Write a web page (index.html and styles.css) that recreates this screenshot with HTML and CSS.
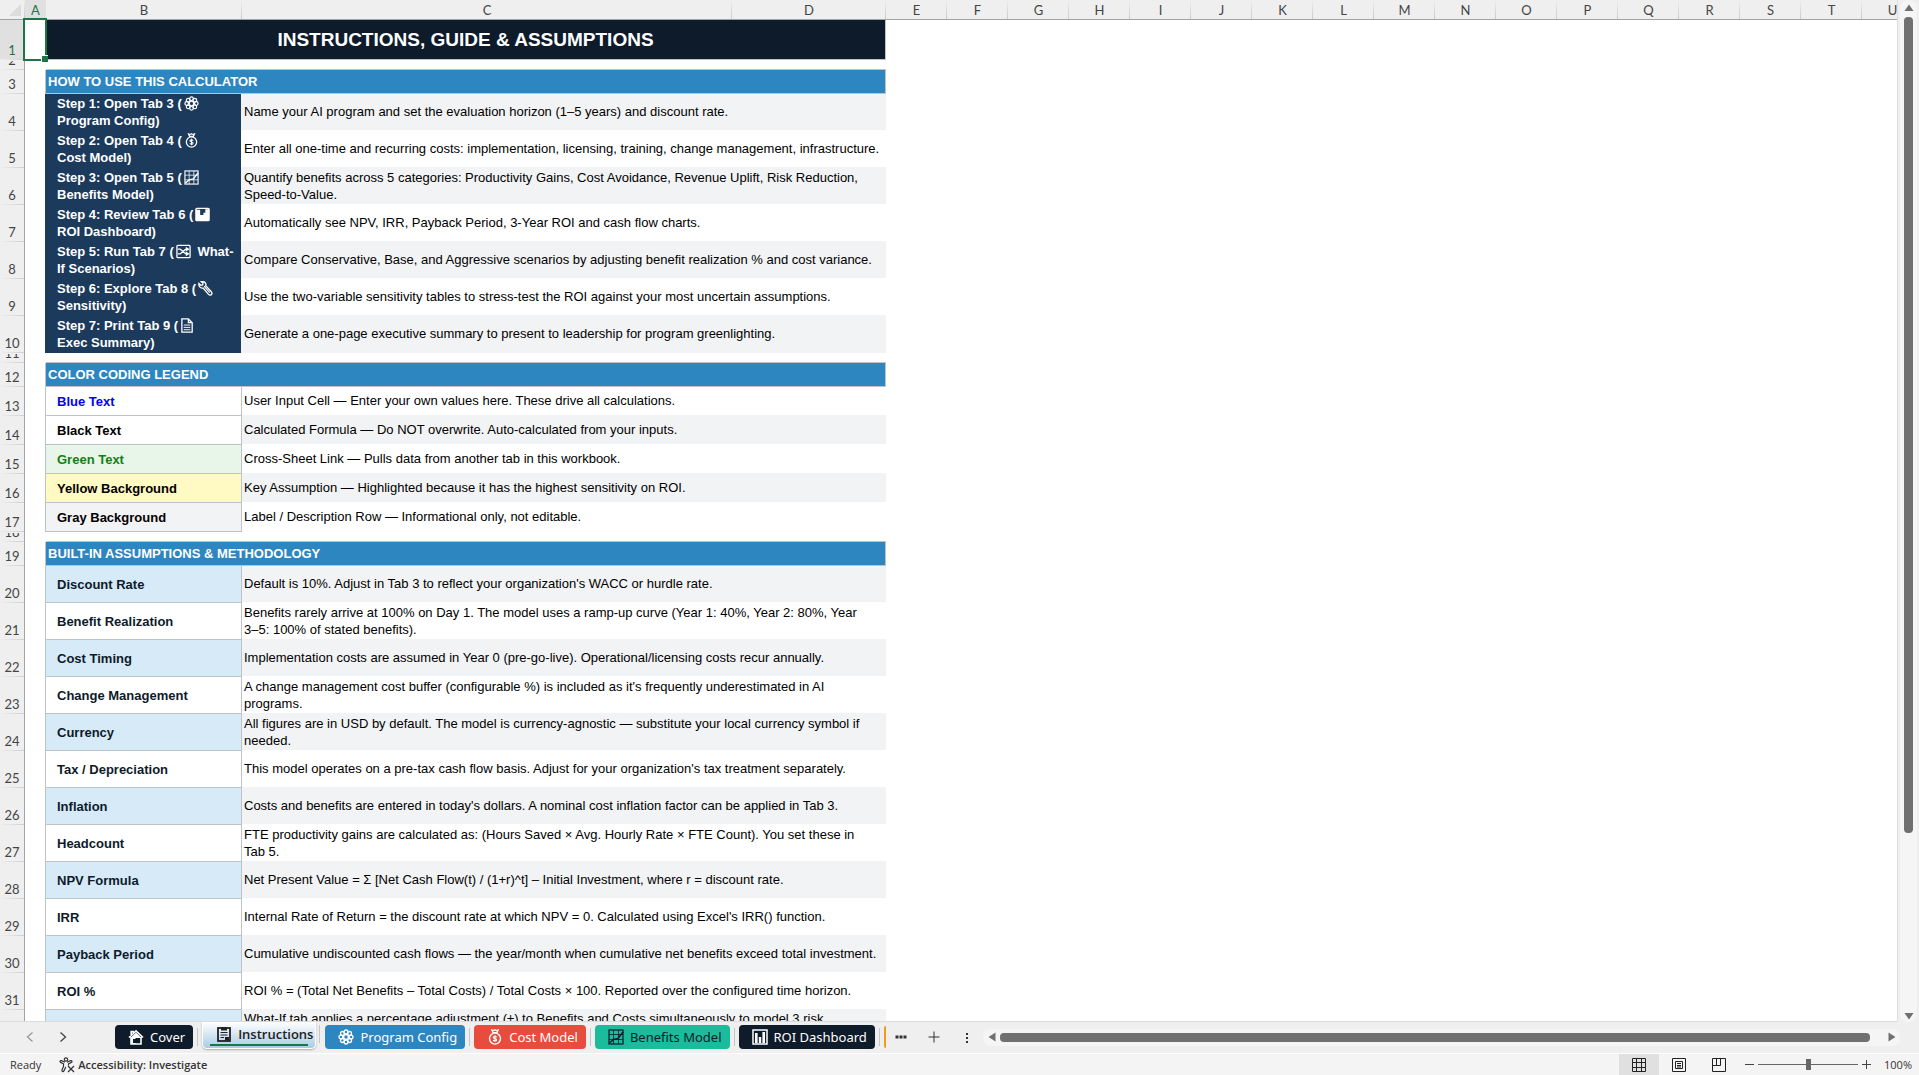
FILE: index.html
```html
<!DOCTYPE html>
<html lang="en">
<head>
<meta charset="utf-8">
<title>Instructions, Guide &amp; Assumptions</title>
<link rel="stylesheet" href="styles.css">
</head>
<body>
<svg class="sprite" aria-hidden="true">
  <symbol id="i-gear" viewBox="0 0 16 16"><g fill="none" stroke="currentColor" stroke-width="1.3"><circle cx="8" cy="8" r="2.4"/><circle cx="8" cy="2.9" r="1.9"/><circle cx="8" cy="13.1" r="1.9"/><circle cx="2.9" cy="8" r="1.9"/><circle cx="13.1" cy="8" r="1.9"/><circle cx="4.4" cy="4.4" r="1.9"/><circle cx="11.6" cy="4.4" r="1.9"/><circle cx="4.4" cy="11.6" r="1.9"/><circle cx="11.6" cy="11.6" r="1.9"/></g></symbol>
  <symbol id="i-bag" viewBox="0 0 16 16"><g fill="none" stroke="currentColor" stroke-width="1.4"><path d="M6 3.6 5 1.2q1.4.8 3-.4 1.600 1.200 3 .4L10 3.600z"/><circle cx="8" cy="9.600" r="5.500"/><path d="M9.700 8.200q-.4-1-1.700-1t-1.700 1.100q0 1 1.700 1.300t1.700 1.300q0 1.100-1.700 1.100t-1.700-1M8 6.200v6.800" stroke-width="1.100"/></g></symbol>
  <symbol id="i-chart" viewBox="0 0 16 16"><g fill="none" stroke="currentColor"><rect x="1" y="1" width="14" height="14" stroke-width="1.200"/><path d="M5.500 1v14M10.500 1v14M1 5.500h14M1 10.500h14" stroke-width=".8"/><path d="m1.500 14 4-3.500 4.500-1 5-6.500" stroke-width="1.500"/></g></symbol>
  <symbol id="i-bars" viewBox="0 0 16 16"><rect x="1" y="1" width="14" height="14" fill="none" stroke="currentColor" stroke-width="1.500"/><path d="M3 4h2.600v10H3zM6.800 8h2.400v6H6.800zM10.400 3H13v11h-2.600z" fill="currentColor"/></symbol>
  <symbol id="i-board" viewBox="0 0 16 16"><rect x="1" y="1.500" width="14" height="13" rx="1" fill="none" stroke="currentColor" stroke-width="1.500"/><path d="M1 3h4.500v5.500H9V6h2V2.500h4V14.500H1z" fill="currentColor"/></symbol>
  <symbol id="i-shuffle" viewBox="0 0 16 16"><g fill="none" stroke="currentColor" stroke-width="1.400"><rect x="1" y="1.500" width="14" height="13" rx="1"/><path d="M2 5.500h2.500l6 5H13M2 10.500h2.500l6-5H13"/></g><path d="m10.500 3 4 2.500-4 2.500zM10.500 8l4 2.500-4 2.500z" fill="currentColor"/></symbol>
  <symbol id="i-wrench" viewBox="0 0 16 16"><path d="M1 2.500 3 4.600l2-.4.300-2L3.500.8q3-.8 4.500 1.500.8 1.400.2 2.700l6 6.500q1.500 2-.2 3.300-1.600.7-3-.8L5.500 7.500Q3 8 1.600 6 .6 4.500 1 2.500z" fill="none" stroke="currentColor" stroke-width="1.400"/><path d="m6.500 5.500 6 7" stroke="currentColor" stroke-width="1.200"/></symbol>
  <symbol id="i-page" viewBox="0 0 16 16"><g fill="none" stroke="currentColor" stroke-width="1.400"><path d="M2 1h7l4 4v10H2z"/><path d="M9 1v4h4"/><path d="M4 7.500h7M4 10h7M4 12.500h7" stroke-width="1"/></g></symbol>
  <symbol id="i-home" viewBox="0 0 16 16"><path d="M1 8.500 8 1.800l7 6.700M3.200 7V2.500h2V5M3 8v7h10V8" fill="none" stroke="currentColor" stroke-width="1.600"/><path d="M3 8.200 8 3.500l5 4.700V9H7.500v6H3z" fill="currentColor"/><path d="M5 10h3v4H5z" fill="#0d1b2a"/></symbol>
  <symbol id="i-clip" viewBox="0 0 16 16"><g fill="none" stroke="currentColor"><rect x="2" y="2" width="12" height="13" stroke-width="1.800"/><path d="M4.500 6.500h7M4.500 9h7M4.500 11.500h3.500" stroke-width="1.100"/></g><path d="M5 1h6v3.500H5zM9 11h4v3.500H9z" fill="currentColor"/></symbol>
</svg>

<div class="app">
  <main class="sheet">
    <table class="grid">
      <colgroup><col class="c-num"><col class="c-a"><col class="c-b"><col class="c-c"><col class="c-d"><col class="c-std" span="17"></colgroup>
      <thead>
        <tr>
          <td class="corner"><svg viewBox="0 0 12 12" aria-hidden="true"><path d="M12 0v12H0z" fill="#dcdcdc"/></svg></td>
          <th class="active" scope="col">A</th><th scope="col">B</th><th scope="col">C</th><th scope="col">D</th><th scope="col">E</th><th scope="col">F</th><th scope="col">G</th><th scope="col">H</th><th scope="col">I</th><th scope="col">J</th><th scope="col">K</th><th scope="col">L</th><th scope="col">M</th><th scope="col">N</th><th scope="col">O</th><th scope="col">P</th><th scope="col">Q</th><th scope="col">R</th><th scope="col">S</th><th scope="col">T</th><th scope="col">U</th>
        </tr>
      </thead>
      <tbody>
        <tr class="r-title"><th class="num active" scope="row"><div>1</div></th><td class="a selected"></td><td class="title" colspan="3">INSTRUCTIONS, GUIDE &amp; ASSUMPTIONS</td></tr>
        <tr class="r-gap"><th class="num" scope="row"><div>2</div></th><td class="a"></td><td class="spacer" colspan="3"></td></tr>
        <tr class="r-section"><th class="num" scope="row"><div>3</div></th><td class="a"></td><td class="section" colspan="3">HOW TO USE THIS CALCULATOR</td></tr>

        <tr class="r-step shade"><th class="num" scope="row"><div>4</div></th><td class="a"></td><td class="label">Step 1: Open Tab 3 (<svg><use href="#i-gear"/></svg> <br>Program Config)</td><td class="desc" colspan="2">Name your AI program and set the evaluation horizon (1–5 years) and discount rate.</td></tr>
        <tr class="r-step"><th class="num" scope="row"><div>5</div></th><td class="a"></td><td class="label">Step 2: Open Tab 4 (<svg><use href="#i-bag"/></svg> <br>Cost Model)</td><td class="desc" colspan="2">Enter all one-time and recurring costs: implementation, licensing, training, change management, infrastructure.</td></tr>
        <tr class="r-step shade"><th class="num" scope="row"><div>6</div></th><td class="a"></td><td class="label">Step 3: Open Tab 5 (<svg><use href="#i-chart"/></svg> <br>Benefits Model)</td><td class="desc wrap" colspan="2">Quantify benefits across 5 categories: Productivity Gains, Cost Avoidance, Revenue Uplift, Risk Reduction, Speed-to-Value.</td></tr>
        <tr class="r-step"><th class="num" scope="row"><div>7</div></th><td class="a"></td><td class="label">Step 4: Review Tab 6 (<svg><use href="#i-board"/></svg> <br>ROI Dashboard)</td><td class="desc" colspan="2">Automatically see NPV, IRR, Payback Period, 3-Year ROI and cash flow charts.</td></tr>
        <tr class="r-step shade"><th class="num" scope="row"><div>8</div></th><td class="a"></td><td class="label">Step 5: Run Tab 7 (<svg><use href="#i-shuffle"/></svg> What-<br>If Scenarios)</td><td class="desc" colspan="2">Compare Conservative, Base, and Aggressive scenarios by adjusting benefit realization % and cost variance.</td></tr>
        <tr class="r-step"><th class="num" scope="row"><div>9</div></th><td class="a"></td><td class="label">Step 6: Explore Tab 8 (<svg><use href="#i-wrench"/></svg> <br>Sensitivity)</td><td class="desc" colspan="2">Use the two-variable sensitivity tables to stress-test the ROI against your most uncertain assumptions.</td></tr>
        <tr class="r-step shade last"><th class="num" scope="row"><div>10</div></th><td class="a"></td><td class="label">Step 7: Print Tab 9 (<svg><use href="#i-page"/></svg> <br>Exec Summary)</td><td class="desc" colspan="2">Generate a one-page executive summary to present to leadership for program greenlighting.</td></tr>

        <tr class="r-gap"><th class="num" scope="row"><div>11</div></th><td class="a"></td><td class="spacer" colspan="3"></td></tr>
        <tr class="r-section"><th class="num" scope="row"><div>12</div></th><td class="a"></td><td class="section" colspan="3">COLOR CODING LEGEND</td></tr>
        <tr class="r-legend"><th class="num" scope="row"><div>13</div></th><td class="a"></td><td class="label blue-text">Blue Text</td><td class="desc" colspan="2">User Input Cell — Enter your own values here. These drive all calculations.</td></tr>
        <tr class="r-legend shade"><th class="num" scope="row"><div>14</div></th><td class="a"></td><td class="label black-text">Black Text</td><td class="desc" colspan="2">Calculated Formula — Do NOT overwrite. Auto-calculated from your inputs.</td></tr>
        <tr class="r-legend"><th class="num" scope="row"><div>15</div></th><td class="a"></td><td class="label green-text">Green Text</td><td class="desc" colspan="2">Cross-Sheet Link — Pulls data from another tab in this workbook.</td></tr>
        <tr class="r-legend shade"><th class="num" scope="row"><div>16</div></th><td class="a"></td><td class="label yellow-fill">Yellow Background</td><td class="desc" colspan="2">Key Assumption — Highlighted because it has the highest sensitivity on ROI.</td></tr>
        <tr class="r-legend last"><th class="num" scope="row"><div>17</div></th><td class="a"></td><td class="label gray-fill">Gray Background</td><td class="desc" colspan="2">Label / Description Row — Informational only, not editable.</td></tr>

        <tr class="r-gap"><th class="num" scope="row"><div>18</div></th><td class="a"></td><td class="spacer" colspan="3"></td></tr>
        <tr class="r-section"><th class="num" scope="row"><div>19</div></th><td class="a"></td><td class="section" colspan="3">BUILT-IN ASSUMPTIONS &amp; METHODOLOGY</td></tr>
        <tr class="r-item shade"><th class="num" scope="row"><div>20</div></th><td class="a"></td><td class="label">Discount Rate</td><td class="desc" colspan="2">Default is 10%. Adjust in Tab 3 to reflect your organization's WACC or hurdle rate.</td></tr>
        <tr class="r-item"><th class="num" scope="row"><div>21</div></th><td class="a"></td><td class="label">Benefit Realization</td><td class="desc wrap" colspan="2">Benefits rarely arrive at 100% on Day 1. The model uses a ramp-up curve (Year 1: 40%, Year 2: 80%, Year <br>3–5: 100% of stated benefits).</td></tr>
        <tr class="r-item shade"><th class="num" scope="row"><div>22</div></th><td class="a"></td><td class="label">Cost Timing</td><td class="desc" colspan="2">Implementation costs are assumed in Year 0 (pre-go-live). Operational/licensing costs recur annually.</td></tr>
        <tr class="r-item"><th class="num" scope="row"><div>23</div></th><td class="a"></td><td class="label">Change Management</td><td class="desc wrap" colspan="2">A change management cost buffer (configurable %) is included as it's frequently underestimated in AI programs.</td></tr>
        <tr class="r-item shade"><th class="num" scope="row"><div>24</div></th><td class="a"></td><td class="label">Currency</td><td class="desc wrap" colspan="2">All figures are in USD by default. The model is currency-agnostic — substitute your local currency symbol if needed.</td></tr>
        <tr class="r-item"><th class="num" scope="row"><div>25</div></th><td class="a"></td><td class="label">Tax / Depreciation</td><td class="desc" colspan="2">This model operates on a pre-tax cash flow basis. Adjust for your organization's tax treatment separately.</td></tr>
        <tr class="r-item shade"><th class="num" scope="row"><div>26</div></th><td class="a"></td><td class="label">Inflation</td><td class="desc" colspan="2">Costs and benefits are entered in today's dollars. A nominal cost inflation factor can be applied in Tab 3.</td></tr>
        <tr class="r-item"><th class="num" scope="row"><div>27</div></th><td class="a"></td><td class="label">Headcount</td><td class="desc wrap" colspan="2">FTE productivity gains are calculated as: (Hours Saved × Avg. Hourly Rate × FTE Count). You set these in <br>Tab 5.</td></tr>
        <tr class="r-item shade"><th class="num" scope="row"><div>28</div></th><td class="a"></td><td class="label">NPV Formula</td><td class="desc" colspan="2">Net Present Value = Σ [Net Cash Flow(t) / (1+r)^t] – Initial Investment, where r = discount rate.</td></tr>
        <tr class="r-item"><th class="num" scope="row"><div>29</div></th><td class="a"></td><td class="label">IRR</td><td class="desc" colspan="2">Internal Rate of Return = the discount rate at which NPV = 0. Calculated using Excel's IRR() function.</td></tr>
        <tr class="r-item shade"><th class="num" scope="row"><div>30</div></th><td class="a"></td><td class="label">Payback Period</td><td class="desc" colspan="2">Cumulative undiscounted cash flows — the year/month when cumulative net benefits exceed total investment.</td></tr>
        <tr class="r-item"><th class="num" scope="row"><div>31</div></th><td class="a"></td><td class="label">ROI %</td><td class="desc" colspan="2">ROI % = (Total Net Benefits – Total Costs) / Total Costs × 100. Reported over the configured time horizon.</td></tr>
        <tr class="r-item shade partial"><th class="num" scope="row"></th><td class="a"></td><td class="label"></td><td class="desc" colspan="2">What-If tab applies a percentage adjustment (±) to Benefits and Costs simultaneously to model 3 risk</td></tr>
      </tbody>
    </table>
  </main>

  <div class="vbar">
    <button aria-label="Scroll up"><svg viewBox="0 0 10 8"><path d="M5 .5 9.500 7H.5z"/></svg></button>
    <div class="vtrack"><div class="vthumb"></div></div>
    <button aria-label="Scroll down"><svg viewBox="0 0 10 8"><path d="M5 7.500.5 1h9z"/></svg></button>
  </div>

  <nav class="tabs" aria-label="Sheets">
    <div class="arrows">
      <button class="dim" aria-label="Previous sheet"><svg viewBox="0 0 10 12"><path d="M7.500 1.500 2.500 6l5 4.500"/></svg></button>
      <button aria-label="Next sheet"><svg viewBox="0 0 10 12"><path d="m2.500 1.500 5 4.500-5 4.500"/></svg></button>
    </div>
    <button class="tab navy"><svg><use href="#i-home"/></svg>Cover</button>
    <button class="tab current"><svg><use href="#i-clip"/></svg><span>Instructions</span></button>
    <button class="tab blue"><svg><use href="#i-gear"/></svg>Program Config</button>
    <button class="tab red"><svg><use href="#i-bag"/></svg>Cost Model</button>
    <button class="tab teal"><svg><use href="#i-chart"/></svg>Benefits Model</button>
    <button class="tab navy"><svg><use href="#i-bars"/></svg>ROI Dashboard</button>
    <div class="sliver"></div>
    <div class="tools">
      <button aria-label="More sheets"><svg viewBox="0 0 12 12"><path d="M.5 4.500h3v3h-3zM4.500 4.500h3v3h-3zM8.500 4.500h3v3h-3z" fill="currentColor"/></svg></button>
      <button aria-label="New sheet"><svg viewBox="0 0 12 12"><path d="M6 .5v11M.5 6h11" stroke="currentColor"/></svg></button>
      <button aria-label="Resize tab strip"><svg viewBox="0 0 12 12"><path d="M5 2h2v2H5zM5 6h2v2H5zM5 10h2v2H5z" fill="currentColor"/></svg></button>
    </div>
    <div class="hbar">
      <button aria-label="Scroll left"><svg viewBox="0 0 8 10"><path d="M.5 5 7.500.5v9z"/></svg></button>
      <div class="hthumb"></div>
      <button aria-label="Scroll right"><svg viewBox="0 0 8 10"><path d="M7.500 5 .5.5v9z"/></svg></button>
    </div>
  </nav>

  <footer class="status">
    <span class="ready">Ready</span>
    <button class="access"><svg viewBox="0 0 16 16" aria-hidden="true"><g fill="none" stroke="currentColor" stroke-width="1.200"><circle cx="7" cy="2.500" r="1.700"/><path d="M6 5.200 2.500 3.600Q1 3.300 1 4.500q0 .7 1 1.100l2.500 1.200v2.700L3 13q-.2 1.600 1 1.600.7 0 1-.8L6.800 10M8 5.200l3.500-1.600Q13 3.300 13 4.500q0 .7-1 1.100L9.500 6.800v1.700"/><path d="m9 9 6 6M15 9l-6 6"/></g></svg>Accessibility: Investigate</button>
    <div class="views">
      <button class="on" aria-label="Normal view"><svg viewBox="0 0 14 14"><path d="M.5.5h13v13H.5zM4.500.5v13M9.500.5v13M.5 4.500h13M.5 9.500h13"/></svg></button>
      <button aria-label="Page layout view"><svg viewBox="0 0 14 14"><path d="M.5.5h13v13H.5zM3.500 3.500h7v7h-7zM5 5.500h4M5 7.500h4M5 9h4"/></svg></button>
      <button aria-label="Page break preview"><svg viewBox="0 0 14 14"><path d="M.5.5h13v13H.5zM4.500.5v7M8.500.5v7M.5 7.500h8"/></svg></button>
    </div>
    <div class="zoom">
      <button aria-label="Zoom out"><svg viewBox="0 0 9 9"><path d="M0 4.500h9"/></svg></button>
      <input type="range" min="0" max="100" value="50" aria-label="Zoom">
      <button aria-label="Zoom in"><svg viewBox="0 0 9 9"><path d="M0 4.500h9M4.500 0v9"/></svg></button>
      <span>100%</span>
    </div>
  </footer>
</div>
</body>
</html>
```
FILE: styles.css
```css
:root {
  --navy: #0d1b2a;
  --step: #1b3a5c;
  --blue: #2e86c1;
  --line: #bdc3c7;
  --shade: #f2f3f4;
  --chrome: #efefef;
  --green: #217346;
  --thumb: #707070;
}

* { box-sizing: border-box; }

body {
  margin: 0;
  font-family: "Open Sans", sans-serif;
  color: #333;
}

button {
  margin: 0;
  padding: 0;
  border: 0;
  background: none;
  color: inherit;
  font: inherit;
}

svg { display: block; }
.sprite { position: absolute; width: 0; height: 0; }

.app {
  display: grid;
  grid-template: minmax(0, 1fr) 31px 22px / minmax(0, 1fr) 21px;
  height: 100vh;
  background: var(--chrome);
}

/* Worksheet */
.sheet {
  overflow: hidden;
  background: #fff;
  border-right: 1px solid #dedede;
  border-bottom: 1px solid #dcdcdc;
}

.grid {
  position: relative;
  width: 1923px;
  table-layout: fixed;
  border-collapse: separate;
  border-spacing: 0;
  font: 13px/17px "Liberation Sans", Arial, sans-serif;
  color: #000;
}

.c-num { width: 25px; }
.c-a { width: 21px; }
.c-b { width: 196px; }
.c-c { width: 490px; }
.c-d { width: 154px; }
.c-std { width: 61px; }

.grid td, .grid th { padding: 0; text-align: left; }

.grid thead th, .grid .corner {
  height: 20px;
  background: linear-gradient(var(--chrome), #c8c8c8) right / 1px 100% no-repeat var(--chrome);
  border-bottom: 1px solid #a3a3a3;
  font: 13px/16px Lato, sans-serif;
  color: #444;
  text-align: center;
}
.grid thead .active {
  background: #e0e0e0;
  color: var(--green);
}
.corner svg { width: 12px; height: 12px; margin-left: 9px; }

.num {
  background: linear-gradient(90deg, var(--chrome), #cfcfcf) bottom / 100% 1px no-repeat var(--chrome);
  border-right: 1px solid #a3a3a3;
  vertical-align: bottom;
  font: 13px/13px Lato, sans-serif;
  color: #444;
}
.num div {
  display: flex;
  align-items: flex-end;
  justify-content: center;
  height: 17px;
  padding-bottom: 3px;
}
.r-gap .num div { height: 9px; overflow: hidden; }
.num.active {
  background-color: #e0e0e0;
  color: var(--green);
}

.a { border-right: 1px solid transparent; }
.grid .selected { position: relative; }
.selected::before {
  content: "";
  position: absolute;
  inset: -2px -2px -1px;
  border: 2px solid var(--green);
}
.selected::after {
  content: "";
  position: absolute;
  right: -3px;
  bottom: -2px;
  width: 6px;
  height: 6px;
  border: solid #fff;
  border-width: 1px 0 0 1px;
  background: var(--green);
}

.r-title { height: 40px; }
.r-gap { height: 10px; }
.r-section { height: 24px; }
.r-legend { height: 29px; }
.r-step, .r-item { height: 37px; }

.grid .title {
  background: var(--navy);
  border-right: 1px solid var(--line);
  border-bottom: 1px solid var(--line);
  font-size: 19px;
  font-weight: bold;
  color: #fff;
  text-align: center;
}
.spacer { border-bottom: 1px solid var(--line); }
.grid .section {
  padding: 0 2px 1px;
  background: var(--blue);
  border-right: 1px solid var(--line);
  border-bottom: 1px solid var(--line);
  font-weight: bold;
  color: #fff;
}
.r-section .a, .r-legend .a, .r-item .a { border-right-color: var(--line); }

.grid .label {
  padding: 0 3px 0 11px;
  border-right: 1px solid var(--line);
  border-bottom: 1px solid var(--line);
  font-weight: bold;
}
.grid .desc {
  padding: 0 2px 2px;
  border-bottom: 1px solid var(--shade);
}
.grid .desc.wrap { padding-bottom: 0; }
.shade .desc {
  background: var(--shade);
  border-bottom-color: #fff;
}
.last .desc { border-bottom-color: #fff; }
.shade.last .desc { border-bottom-color: var(--shade); }

.r-step .a { border-right-color: var(--step); }
.grid .r-step .label {
  padding-bottom: 2px;
  background: var(--step) padding-box;
  border-right-color: #fff;
  border-bottom: 0;
  color: #fff;
}
.grid .r-step.shade .label { border-right-color: var(--shade); }
.label svg {
  display: inline-block;
  width: 15px;
  height: 15px;
  margin: -2px 3px 0 2px;
  vertical-align: -3px;
}

.blue-text { color: #00f; }
.green-text { background: #e8f5e9; color: #138013; }
.yellow-fill { background: #fff9c4; }
.gray-fill { background: var(--shade); }
.r-item .label { color: var(--navy); }
.r-item.shade .label { background: #d6eaf8; }
.partial .desc { vertical-align: top; }

/* Vertical scroll bar */
.vbar {
  display: flex;
  flex-direction: column;
  align-items: center;
  margin: 0 2px;
  padding: 4px 0 2px;
  border-radius: 8px;
  background: #f5f5f5;
}
.vbar svg { width: 10px; height: 8px; fill: var(--thumb); }
.vtrack { flex: 1; padding: 5px 0 0; }
.vthumb {
  width: 9px;
  height: 82%;
  border-radius: 4px;
  background: var(--thumb);
}

/* Sheet tabs */
.tabs {
  grid-column: 1 / -1;
  display: flex;
  align-items: center;
  padding: 0 19px 1px 0;
  font: 13px/18px "Noto Sans", sans-serif;
}
.arrows {
  display: flex;
  gap: 23px;
  width: 115px;
  padding-left: 25px;
}
.arrows svg {
  width: 10px;
  height: 12px;
  fill: none;
  stroke: #444;
  stroke-width: 1.3;
}
.arrows .dim svg { stroke: #999; }

.tab {
  position: relative;
  display: flex;
  flex: none;
  align-items: center;
  gap: 6px;
  height: 24px;
  margin-right: 9px;
  padding: 0 8px 0 13px;
  border-radius: 4px;
  color: #fff;
}
.tab::after {
  content: "";
  position: absolute;
  top: 3px;
  right: -5px;
  width: 1px;
  height: 18px;
  background: #c6c6c6;
}
.tab svg { width: 16px; height: 16px; }
.navy { background: var(--navy); }
.blue { background: var(--blue); }
.red { background: #e74c3c; }
.teal { background: #1abc9c; color: #0d1b2a; }
.current {
  align-self: flex-start;
  height: 27px;
  padding: 0 2px 2px 13px;
  border: 1px solid #fff;
  border-top: 0;
  border-radius: 0 0 5px 5px;
  background: linear-gradient(#fff, #a9cbe6);
  box-shadow: 0 1px 2px #aaa;
  font: 600 13px/18px "Open Sans", sans-serif;
  color: #222;
}
.current::before {
  content: "";
  position: absolute;
  right: 7px;
  bottom: 2px;
  left: 7px;
  height: 2px;
  background: #107c41;
}
.sliver {
  width: 2px;
  height: 22px;
  background: #f39c12;
  border-radius: 2px 0 0 2px;
}
.tools {
  display: flex;
  gap: 21px;
  padding: 0 10px 0 9px;
}
.tools svg { width: 12px; height: 12px; }
.hbar {
  display: flex;
  flex: 1;
  align-items: center;
  height: 17px;
  padding: 0 4px 0 5px;
  border-radius: 8px;
  background: #f5f5f5;
}
.hbar svg { width: 8px; height: 10px; fill: var(--thumb); }
.hthumb {
  flex: 1;
  height: 9px;
  margin: 0 18px 0 4px;
  border-radius: 4px;
  background: var(--thumb);
}

/* Status bar */
.status {
  grid-column: 1 / -1;
  display: flex;
  align-items: center;
  padding: 0 7px 0 10px;
  border-top: 1px solid #fff;
  background: #f4f4f4;
  font-size: 11px;
  line-height: 16px;
}
.access {
  display: flex;
  align-items: center;
  gap: 3px;
  margin-left: 18px;
  font-weight: 600;
}
.access svg { width: 16px; height: 16px; }
.views {
  display: flex;
  align-self: stretch;
  margin-left: auto;
}
.views button {
  display: grid;
  place-items: center;
  width: 40px;
}
.views .on { background: #e0e0e0; }
.views svg {
  width: 14px;
  height: 14px;
  fill: none;
  stroke: #222;
}
.zoom {
  display: flex;
  align-items: center;
  margin-left: 6px;
}
.zoom svg { width: 9px; height: 9px; stroke: #444; }
.zoom input {
  width: 100px;
  height: 11px;
  margin: 0 4px;
  appearance: none;
  background: linear-gradient(#666, #666) center / 100% 1px no-repeat;
}
.zoom input::-webkit-slider-thumb {
  appearance: none;
  width: 5px;
  height: 11px;
  background: #666;
}
.zoom span { margin-left: 13px; }
```
